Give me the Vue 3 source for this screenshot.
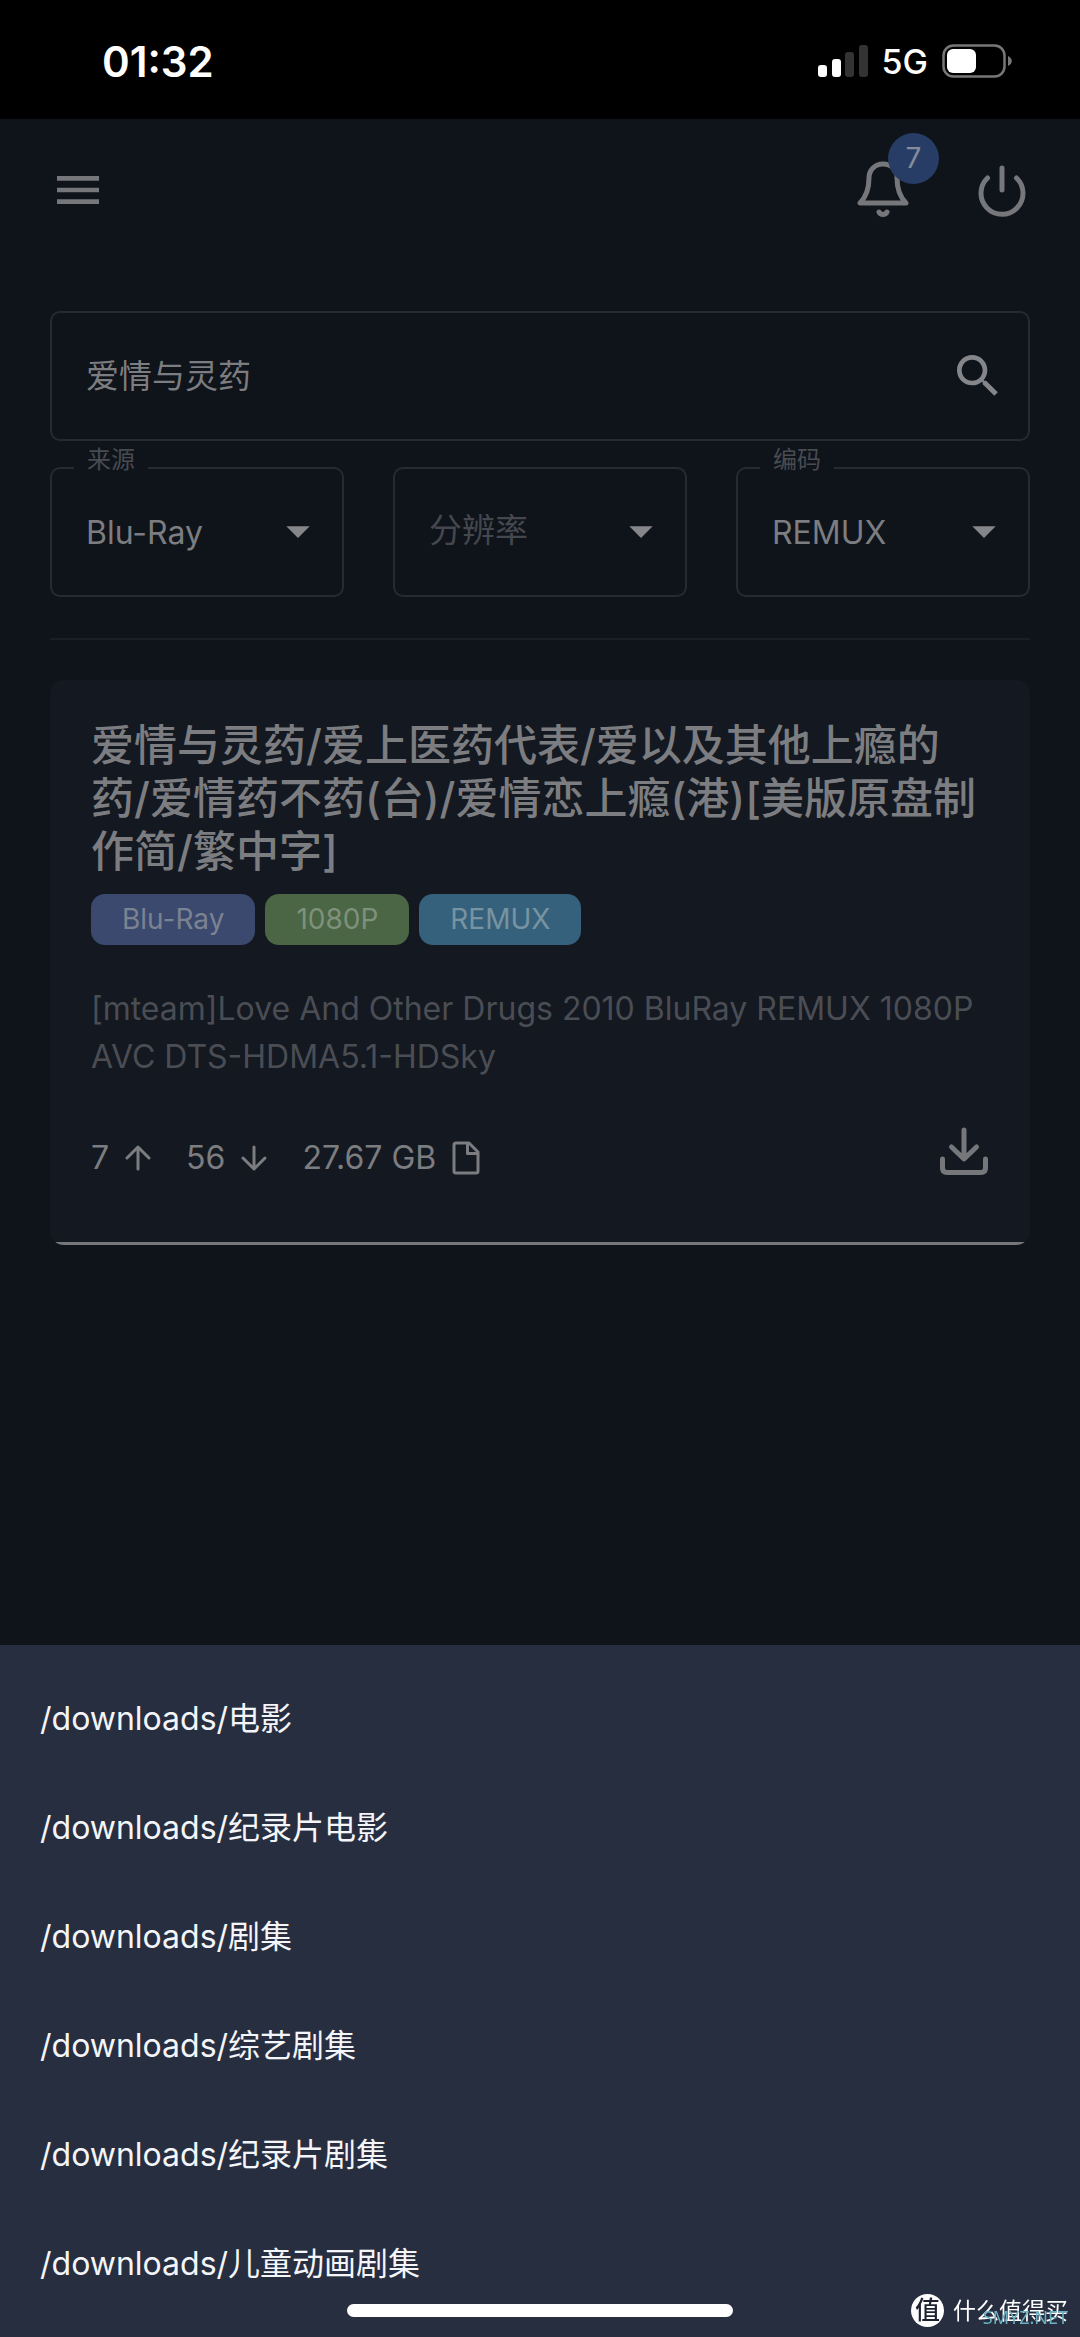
<script setup>
import { ref } from 'vue'

const keyword = ref('爱情与灵药')

const filters = ref([
  { id: 'source', label: '来源', value: 'Blu-Ray', options: ['Blu-Ray', 'WEB-DL'] },
  { id: 'resolution', label: '分辨率', value: '', options: ['1080P', '2160P'] },
  { id: 'codec', label: '编码', value: 'REMUX', options: ['REMUX', 'x265'] },
])

const tags = [
  { text: 'Blu-Ray', kind: 'media' },
  { text: '1080P', kind: 'resolution' },
  { text: 'REMUX', kind: 'codec' },
]

const folders = [
  '/downloads/电影',
  '/downloads/纪录片电影',
  '/downloads/剧集',
  '/downloads/综艺剧集',
  '/downloads/纪录片剧集',
  '/downloads/儿童动画剧集',
]
</script>

<template>
  <div class="app">
    <div class="status">
      <span class="clock">01:32</span>
      <div class="status-right">
        <svg width="50" height="32" viewBox="0 0 50 32" aria-hidden="true">
          <rect x="0" y="20" width="9" height="12" rx="3" fill="#fff" />
          <rect x="14" y="14" width="9" height="18" rx="3" fill="#fff" />
          <rect x="27" y="7" width="9" height="25" rx="3" fill="#333" />
          <rect x="41" y="0" width="9" height="32" rx="3" fill="#333" />
        </svg>
        <span class="network">5G</span>
        <svg width="70" height="34" viewBox="0 0 70 34" aria-hidden="true">
          <rect x="1.5" y="1.5" width="61" height="31" rx="10" fill="none" stroke="#77777a" stroke-width="2.5" />
          <rect x="5" y="5" width="29" height="24" rx="6" fill="#fff" />
          <path d="M66 12c5 2 5 8 0 10z" fill="#77777a" />
        </svg>
      </div>
    </div>

    <header class="topbar">
      <button class="icon-button" aria-label="菜单">
        <svg width="56" height="56" viewBox="0 0 24 24" fill="currentColor">
          <path d="M3 18h18v-2H3v2zm0-5h18v-2H3v2zm0-7v2h18V6H3z" />
        </svg>
      </button>
      <div class="actions">
        <button class="icon-button bell" aria-label="通知">
          <svg width="52" height="57" viewBox="0 0 52 57" fill="none" stroke="currentColor" stroke-width="5" stroke-linecap="round" stroke-linejoin="round">
            <path d="M26 3C18 3 12 9 12 17C12 28 9 36 3 42H49C43 36 40 28 40 17C40 9 34 3 26 3Z" />
            <path d="M22 51a4.500 4.500 0 0 0 8 0" />
          </svg>
          <span class="badge">7</span>
        </button>
        <button class="icon-button" aria-label="退出">
          <svg width="48" height="54" viewBox="0 0 48 54" fill="none" stroke="currentColor" stroke-width="5" stroke-linecap="round">
            <path d="M24 5V27M9.500 15A21 21 0 1 0 38.500 15" />
          </svg>
        </button>
      </div>
    </header>

    <main class="content">
      <form class="search" @submit.prevent>
        <input v-model="keyword" class="search-input" type="text" aria-label="搜索" />
        <button class="icon-button bright" aria-label="搜索">
          <svg width="56" height="56" viewBox="0 0 24 24" fill="currentColor">
            <path d="M15.5 14h-.79l-.28-.27C15.41 12.59 16 11.11 16 9.5 16 5.91 13.09 3 9.5 3S3 5.91 3 9.5 5.91 16 9.5 16c1.61 0 3.09-.59 4.23-1.57l.27.28v.79l5 4.99L20.49 19l-4.99-5zm-6 0C7.01 14 5 11.99 5 9.5S7.01 5 9.5 5 14 7.01 14 9.5 11.99 14 9.5 14z" />
          </svg>
        </button>
      </form>

      <div class="filters">
        <div v-for="f in filters" :key="f.id" class="filter">
          <label v-if="f.value" class="filter-label" :for="f.id">{{ f.label }}</label>
          <select :id="f.id" v-model="f.value" class="filter-select" :class="{ empty: !f.value }" :aria-label="f.label">
            <option v-if="!f.value" value="">{{ f.label }}</option>
            <option v-for="o in f.options" :key="o" :value="o">{{ o }}</option>
          </select>
          <svg class="filter-arrow" width="56" height="56" viewBox="0 0 24 24" fill="currentColor" aria-hidden="true">
            <path d="M7 10l5 5 5-5z" />
          </svg>
        </div>
      </div>

      <hr class="divider" />

      <article class="card">
        <h2 class="title">爱情与灵药/爱上医药代表/爱以及其他上瘾的药/爱情药不药(台)/爱情恋上瘾(港)[美版原盘制作简/繁中字]</h2>
        <div class="tags">
          <span v-for="t in tags" :key="t.text" class="tag" :class="t.kind">{{ t.text }}</span>
        </div>
        <p class="release">[mteam]Love And Other Drugs 2010 BluRay REMUX 1080P AVC DTS-HDMA5.1-HDSky</p>
        <div class="card-foot">
          <div class="stats">
            <span class="stat">7
              <svg width="26" height="26" viewBox="0 0 26 26" fill="none" stroke="currentColor" stroke-width="3" stroke-linecap="round" stroke-linejoin="round"><path d="M13 24V2M2 13L13 2L24 13" /></svg>
            </span>
            <span class="stat">56
              <svg width="26" height="26" viewBox="0 0 26 26" fill="none" stroke="currentColor" stroke-width="3" stroke-linecap="round" stroke-linejoin="round"><path d="M13 2V24M2 13L13 24L24 13" /></svg>
            </span>
            <span class="stat">27.67 GB
              <svg width="28" height="34" viewBox="0 0 28 34" fill="none" stroke="currentColor" stroke-width="3" stroke-linejoin="round"><path d="M17 2H4Q2 2 2 4V30Q2 32 4 32H24Q26 32 26 30V11ZM15.500 2V12.500H26" /></svg>
            </span>
          </div>
          <button class="icon-button" aria-label="下载">
            <svg width="48" height="48" viewBox="0 0 48 48" fill="none" stroke="currentColor" stroke-width="5" stroke-linecap="round" stroke-linejoin="round">
              <path d="M24 3V31M11.500 20L24 32L36.500 20M2.500 32V41Q2.500 45.500 7 45.500H41Q45.500 45.500 45.500 41V32" />
            </svg>
          </button>
        </div>
      </article>
    </main>

    <nav class="sheet" aria-label="下载目录">
      <button v-for="f in folders" :key="f" class="folder">{{ f }}</button>
    </nav>

    <div class="home-indicator"></div>
    <div class="watermark">
      <span class="mark">值</span>
      <span class="mark-name">什么值得买</span>
      <span class="mark-site">SMYZ.NET</span>
    </div>
  </div>
</template>

<style>
body {
  margin: 0;
  background: #0f131a;
}
</style>

<style scoped>
.app {
  min-height: 100vh;
  background: #0f131a;
  color: #7c7d80;
  font-family: Inter, "Noto Sans CJK SC", sans-serif;
  font-size: 32px;
}

.app * {
  box-sizing: border-box;
}

button,
input,
select {
  margin: 0;
  padding: 0;
  border: 0;
  background: none;
  color: inherit;
  font: inherit;
}

svg {
  display: block;
  flex: none;
}

.status {
  display: flex;
  justify-content: space-between;
  align-items: center;
  height: 119px;
  padding: 3px 68px 0 102px;
  background: #000;
  color: #fff;
}

.clock {
  font-size: 42px;
  font-weight: 600;
}

.status-right {
  display: flex;
  align-items: center;
  gap: 14px;
}

.network {
  font-size: 34px;
  font-weight: 500;
}

.topbar {
  display: flex;
  justify-content: space-between;
  align-items: center;
  padding: 42px 54px 93px 50px;
}

.icon-button {
  color: #76777b;
}

.bright {
  color: #85868a;
}

.actions {
  display: flex;
  align-items: center;
  gap: 69px;
}

.bell {
  position: relative;
}

.badge {
  position: absolute;
  top: -28px;
  right: -30px;
  width: 51px;
  height: 51px;
  border-radius: 50%;
  background: #273d66;
  color: #858c9c;
  font-size: 28px;
  line-height: 51px;
  text-align: center;
}

.content {
  padding: 0 50px;
}

.search {
  display: flex;
  align-items: center;
  height: 130px;
  padding: 0 22px 0 34px;
  border: 2px solid #272a31;
  border-radius: 10px;
}

.search-input {
  flex: 1;
  min-width: 0;
  padding-bottom: 4px;
  font-size: 33px;
  outline: none;
}

.filters {
  display: flex;
  gap: 49px;
  margin-top: 26px;
}

.filter {
  position: relative;
  flex: 1;
}

.filter-label {
  position: absolute;
  top: -20px;
  left: 24px;
  padding: 0 13px;
  background: #0f131a;
  color: #484b51;
  font-size: 24px;
  line-height: 26px;
}

.filter-select {
  display: block;
  width: 100%;
  height: 130px;
  padding-left: 34px;
  border: 2px solid #272a31;
  border-radius: 10px;
  appearance: none;
}

.filter-select.empty {
  padding-bottom: 4px;
  color: #44474d;
  font-size: 33px;
}

.filter-arrow {
  position: absolute;
  top: 36px;
  right: 18px;
  color: #85868a;
  pointer-events: none;
}

.divider {
  height: 2px;
  margin: 41px 0 40px;
  border: 0;
  background: #1b1e25;
}

.card {
  padding: 39px 42px 70px 41px;
  border-radius: 14px;
  background: linear-gradient(#76777a, #76777a) bottom / 100% 3px no-repeat #141820;
}

.title {
  margin: 0;
  font-size: 43px;
  font-weight: 500;
  line-height: 53px;
}

.tags {
  display: flex;
  gap: 10px;
  margin-top: 16px;
}

.tag {
  padding: 0 31px;
  border-radius: 14px;
  font-size: 28px;
  line-height: 51px;
}

.media {
  background: #3a496d;
  color: #7b8291;
}

.resolution {
  background: #4a6644;
  color: #7f907c;
}

.codec {
  background: #36617c;
  color: #7893a1;
}

.release {
  margin: 40px 0 46px;
  color: #4a4d54;
  line-height: 48px;
}

.card-foot {
  display: flex;
  justify-content: space-between;
  align-items: flex-end;
}

.stats {
  display: flex;
  gap: 35px;
}

.stat {
  display: flex;
  align-items: center;
  gap: 16px;
  line-height: 34px;
}

.sheet {
  position: fixed;
  right: 0;
  bottom: 0;
  left: 0;
  display: flex;
  flex-direction: column;
  padding: 16px 0 22px;
  background: #272e40;
}

.folder {
  height: 109px;
  padding: 0 40px;
  color: #f4f5f8;
  font-size: 32px;
  text-align: left;
}

.home-indicator {
  position: fixed;
  bottom: 20px;
  left: 50%;
  width: 386px;
  height: 13px;
  margin-left: -193px;
  border-radius: 7px;
  background: #fff;
}

.watermark {
  position: fixed;
  right: 12px;
  bottom: 10px;
  display: flex;
  align-items: center;
  gap: 9px;
  color: #fff;
}

.mark {
  width: 33px;
  height: 33px;
  border-radius: 50%;
  background: #fff;
  color: #1d2230;
  font-size: 25px;
  font-weight: 500;
  line-height: 32px;
  text-align: center;
}

.mark-name {
  font-size: 23px;
  line-height: 32px;
}

.mark-site {
  position: absolute;
  right: 0;
  bottom: 0;
  color: #6bb0c2;
  font-family: "Noto Sans", sans-serif;
  font-size: 18px;
  line-height: 20px;
}
</style>
